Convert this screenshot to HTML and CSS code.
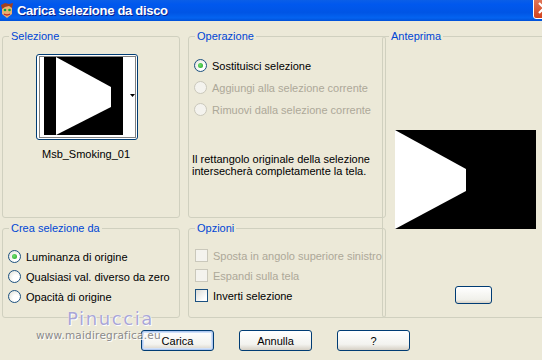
FILE: index.html
```html
<!DOCTYPE html>
<html lang="it">
<head>
  <meta charset="UTF-8">
  <title>Carica selezione da disco</title>
  <link rel="stylesheet" href="styles.css">
</head>
<body>

<div class="finestra">
  <div class="titolo">
    <svg class="icona" width="14" height="16" viewBox="0 0 14 16">
      <path d="M2 3 L7 1 L12 3 L12 11 L7 15 L2 11 Z" fill="#e8b070"/>
      <path d="M1 2 L5 0 L9 1 L13 0 L12 5 L9 3 L5 4 L2 6 Z" fill="#a04020"/>
      <circle cx="5" cy="7" r="1.3" fill="#1a3"/>
      <circle cx="9.5" cy="7" r="1.3" fill="#1a3"/>
      <path d="M4 11 Q7 13 10 11" stroke="#c02020" stroke-width="1.3" fill="none"/>
    </svg>
    <span class="titolo-testo">Carica selezione da disco</span>
    <div class="chiudi">
      <svg width="21" height="20" viewBox="0 0 21 20">
        <path d="M5 5 L15 15 M15 5 L5 15" stroke="#fff" stroke-width="2.2"/>
      </svg>
    </div>
  </div>

  <div class="corpo">
    <div class="griglia">
      <fieldset class="gruppo sel">
        <legend>Selezione</legend>
        <div class="miniatura">
          <svg width="100" height="84" viewBox="0 0 100 84">
            <rect x="7" y="2" width="79" height="78" fill="#000"/>
            <rect x="86" y="2" width="10" height="78" fill="#fff"/>
            <polygon points="19,2 74,32 74,52 19,80" fill="#fff"/>
            <polygon points="93,39 98,39 95.5,42" fill="#000"/>
            <rect x="2.5" y="1.5" width="96" height="81" fill="none" stroke="#000" stroke-dasharray="1 1"/>
          </svg>
        </div>
        <div class="didascalia">Msb_Smoking_01</div>
      </fieldset>

      <fieldset class="gruppo oper">
        <legend>Operazione</legend>
        <div class="lista prima">
          <div class="voce"><span class="radio on"></span>Sostituisci selezione</div>
          <div class="voce off"><span class="radio"></span>Aggiungi alla selezione corrente</div>
          <div class="voce off"><span class="radio"></span>Rimuovi dalla selezione corrente</div>
        </div>
        <p class="nota">Il rettangolo originale della selezione intersecherà completamente la tela.</p>
      </fieldset>

      <fieldset class="gruppo anteprima">
        <legend>Anteprima</legend>
        <div class="quadro">
          <svg width="141" height="99" viewBox="0 0 141 99">
            <rect width="141" height="99" fill="#000"/>
            <polygon points="0,0 71,39 71,61 0,99" fill="#fff"/>
          </svg>
        </div>
        <div class="mini-btn"></div>
      </fieldset>

      <fieldset class="gruppo crea">
        <legend>Crea selezione da</legend>
        <div class="lista">
          <div class="voce"><span class="radio on"></span>Luminanza di origine</div>
          <div class="voce"><span class="radio"></span>Qualsiasi val. diverso da zero</div>
          <div class="voce"><span class="radio"></span>Opacità di origine</div>
        </div>
      </fieldset>

      <fieldset class="gruppo opz">
        <legend>Opzioni</legend>
        <div class="lista">
          <div class="voce off"><span class="check"></span>Sposta in angolo superiore sinistro</div>
          <div class="voce off"><span class="check"></span>Espandi sulla tela</div>
          <div class="voce"><span class="check"></span>Inverti selezione</div>
        </div>
      </fieldset>
    </div>

    <div class="pulsanti">
      <button class="btn attivo">Carica</button>
      <button class="btn">Annulla</button>
      <button class="btn">?</button>
    </div>

    <div class="firma">
      <div class="firma-nome">Pinuccia</div>
      <div class="firma-sito">www.maidiregrafica.eu</div>
    </div>
  </div>
</div>

</body>
</html>
```

FILE: styles.css
```css
body { margin: 0; width: 542px; height: 360px; overflow: hidden; background: #ece9d8; font-family: "Liberation Sans", Arial, sans-serif; font-size: 11px; color: #000; }
.finestra { position: relative; height: 360px; }

.titolo { height: 21px; display: flex; align-items: center; background: linear-gradient(#0a5ee8 0%, #0058ee 20%, #0055e5 60%, #0463f0 85%, #0050d8 100%); overflow: hidden; position: relative; }
.icona { margin: 0 3px 0 0; }
.titolo-testo { color: #fff; font-weight: bold; font-size: 13px; letter-spacing: -0.3px; font-family: "Liberation Sans", Arial, sans-serif; text-shadow: 1px 1px 0 #0a1e8c; }
.chiudi { position: absolute; left: 533px; top: -3px; width: 21px; height: 20px; background: linear-gradient(#e27a5c, #d2421c); border: 1px solid #fff; border-radius: 3px; }
.chiudi svg { display: block; }

.corpo { padding: 9px 0 0 2px; }
.griglia { display: grid; grid-template-columns: 178px 192px 158px; grid-template-rows: 188px 96px; column-gap: 8px; row-gap: 4px; }
.gruppo { margin: 0; padding: 0; border: 1px solid #d0d0bf; border-radius: 3px; min-width: 0; }
.gruppo legend { color: #0046d5; padding: 0 2px; margin-left: 6px; line-height: 13px; }
.oper { margin-right: -6px; }
.anteprima { grid-row: 1 / 3; grid-column: 3; margin-left: -6px; margin-right: -2px; }
.crea { grid-row: 2; grid-column: 1; }
.opz { grid-row: 2; grid-column: 2; margin-right: -6px; }

.miniatura { width: 100px; height: 84px; margin: 11px 0 0 33px; border: 1px solid #003c74; border-radius: 3px; background: #fff; }
.miniatura svg { display: block; }
.didascalia { width: 100px; margin: 8px 0 0 33px; text-align: center; }

.lista { display: flex; flex-direction: column; gap: 7px; margin-top: 14px; padding-left: 5px; }
.oper .lista { gap: 9px; margin-top: 16px; padding-left: 5px; }
.crea .lista { margin-top: 15px; }
.opz .lista { padding-left: 6px; }
.voce { display: flex; align-items: center; gap: 5px; height: 13px; white-space: nowrap; }
.voce.off { color: #aca899; }
.radio { width: 11px; height: 11px; border: 1px solid #1c5180; border-radius: 50%; background: radial-gradient(circle at 65% 65%, #fff 30%, #dcdcd0 100%); position: relative; }
.radio.on::after { content: ""; position: absolute; left: 3px; top: 3px; width: 5px; height: 5px; border-radius: 50%; background: radial-gradient(circle at 40% 40%, #6fe26f, #21a121); }
.off .radio { border-color: #cac8bb; background: #f4f3ee; }
.check { width: 11px; height: 11px; border: 1px solid #1c5180; background: linear-gradient(135deg, #dcdcd7 0%, #fff 80%); }
.off .check { border-color: #cac8bb; background: #f4f3ee; }

.nota { margin: 37px 0 0 3px; line-height: 12px; width: 180px; }

.quadro { margin: 87px 0 0 12px; }
.quadro svg { display: block; }
.mini-btn { width: 35px; height: 16px; margin: 57px 0 0 72px; border: 1px solid #003c74; border-radius: 3px; background: linear-gradient(#fff, #f0f0ea 80%, #d6d0c5); }

.pulsanti { display: flex; gap: 25px; margin: 12px 0 0 139px; }
.btn { width: 73px; height: 21px; padding: 0; font: inherit; font-size: 11px; color: #000; border: 1px solid #003c74; border-radius: 3px; background: linear-gradient(#fff 0%, #f3f3ef 70%, #d6d0c5 100%); }
.btn.attivo { box-shadow: inset 0 0 0 1px #b0c8f0, inset 0 0 0 2px #d0e0f8; }

.firma { position: absolute; left: 36px; top: 308px; }
.firma-nome { margin-left: 31px; font-family: "DejaVu Sans", sans-serif; font-size: 18px; letter-spacing: 1.6px; color: #a9a6d6; text-shadow: 0 0 1px #fff, 1px 1px 0 #fff; line-height: 21px; }
.firma-sito { font-family: "DejaVu Sans", sans-serif; font-size: 10.5px; letter-spacing: 0.2px; color: #8a8a8a; text-shadow: 1px 1px 0 #fff; line-height: 13px; }
```
